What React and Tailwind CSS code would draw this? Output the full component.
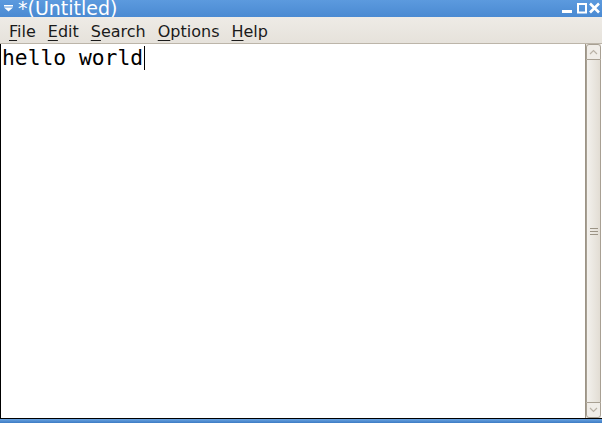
import React from "react";

function TitleButtons() {
  return (
    <div className="flex items-center pr-[2px] pb-[1px]">
      <svg width="10" height="12" viewBox="0 0 10 12" className="mr-[5px]">
        <rect x="0" y="8" width="10" height="3" fill="#fff" />
      </svg>
      <svg width="10" height="12" viewBox="0 0 10 12" className="mr-[2px]">
        <rect x="1" y="2" width="8" height="8.5" fill="none" stroke="#fff" strokeWidth="2" />
      </svg>
      <svg width="11" height="12" viewBox="0 0 11 12">
        <path d="M1 1.5 L10 10.5 M10 1.5 L1 10.5" stroke="#fff" strokeWidth="2.6" />
      </svg>
    </div>
  );
}

function MenuItem({ first, rest }) {
  return (
    <span className="px-[6px]">
      <span className="underline underline-offset-[3px] decoration-1">{first}</span>
      {rest}
    </span>
  );
}

export default function App() {
  return (
    <div className="w-[602px] h-[423px] flex flex-col bg-[#4e8fd6] font-['DejaVu_Sans',sans-serif] overflow-hidden">
      <div className="h-[17px] flex items-start justify-between bg-gradient-to-b from-[#5c9ade] to-[#4a8ad2] text-white overflow-hidden">
        <div className="flex items-start">
          <svg width="16" height="17" viewBox="0 0 16 17" className="ml-[2px]">
            <rect x="2" y="5" width="9" height="1.5" fill="#fff" />
            <path d="M2 7.5 H11 L6.5 11.5 Z" fill="#fff" />
          </svg>
          <span className="text-[19px] leading-[17px] whitespace-nowrap">*(Untitled)</span>
        </div>
        <div className="h-[17px] flex items-center">
          <TitleButtons />
        </div>
      </div>
      <div className="h-[27px] flex items-center pt-[3px] bg-gradient-to-b from-[#eeebe6] to-[#e6e2db] border-b border-[#bcb5a9] text-[16px] text-[#1a1a1a] pl-[3px]">
        <MenuItem first="F" rest="ile" />
        <MenuItem first="E" rest="dit" />
        <MenuItem first="S" rest="earch" />
        <MenuItem first="O" rest="ptions" />
        <MenuItem first="H" rest="elp" />
      </div>
      <div className="flex-1 flex bg-white border-l border-black border-b border-b-black">
        <div className="flex-1 pt-[2px] pl-[1px]">
          <div className="flex items-start font-['DejaVu_Sans_Mono',monospace] text-[21.3px] leading-[24px] text-black">
            <span>hello world</span>
            <span className="w-px h-[24px] bg-black ml-[1px]" />
          </div>
        </div>
        <div className="w-[16px] flex flex-col bg-[#e8e4dd] border-l border-[#9c9486] mr-px">
          <div className="h-[16px] flex items-center justify-center bg-[#f0ede8] border border-[#a8a093] rounded-t-[3px]">
            <svg width="9" height="6" viewBox="0 0 9 6">
              <path d="M1 5 L4.5 1.5 L8 5" fill="none" stroke="#b9b2a6" strokeWidth="1.2" />
            </svg>
          </div>
          <div className="flex-1 flex items-center justify-center bg-gradient-to-r from-[#f3f1ed] to-[#e2ddd4] border-x border-[#a8a093]">
            <div className="flex flex-col gap-[2px]">
              <div className="w-[8px] h-px bg-[#9c9486]" />
              <div className="w-[8px] h-px bg-[#9c9486]" />
              <div className="w-[8px] h-px bg-[#9c9486]" />
            </div>
          </div>
          <div className="h-[16px] flex items-center justify-center bg-[#f0ede8] border border-[#a8a093] rounded-b-[3px]">
            <svg width="9" height="6" viewBox="0 0 9 6">
              <path d="M1 1 L4.5 4.5 L8 1" fill="none" stroke="#b9b2a6" strokeWidth="1.2" />
            </svg>
          </div>
        </div>
      </div>
      <div className="h-[4px] bg-gradient-to-b from-[#6aa3e0] to-[#3d7cc4]" />
    </div>
  );
}
